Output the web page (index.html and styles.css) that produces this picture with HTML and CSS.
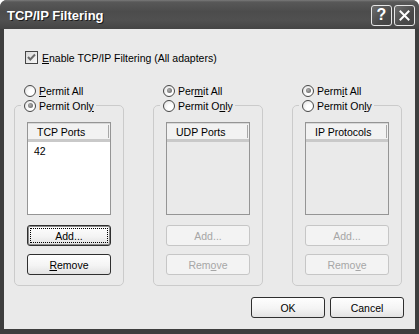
FILE: index.html
```html
<!DOCTYPE html>
<html>
<head>
<meta charset="utf-8">
<link rel="stylesheet" href="styles.css">
</head>
<body>
<div class="window">
  <div class="titlebar">
    <span class="title">TCP/IP Filtering</span>
    <div class="tb-btns">
      <span class="tb-btn help">?</span>
      <span class="tb-btn close"><svg width="11" height="11" viewBox="0 0 11 11"><path d="M1.5 1.5 L9.5 9.5 M9.5 1.5 L1.5 9.5" stroke="#fff" stroke-width="2" stroke-linecap="square"/></svg></span>
    </div>
  </div>
  <div class="client">
    <div class="check-row">
      <span class="checkbox"><svg width="11" height="11" viewBox="0 0 11 11"><path d="M2 5 L4.3 7.5 L9 2.5" fill="none" stroke="#6a6a6a" stroke-width="2"/></svg></span>
      <span><u>E</u>nable TCP/IP Filtering (All adapters)</span>
    </div>
    <div class="columns">
      <div class="col">
        <div class="radio-row top"><span class="radio"></span><span><u>P</u>ermit All</span></div>
        <fieldset class="group">
          <legend><span class="radio-row"><span class="radio on"></span><span>Permit Onl<u>y</u></span></span></legend>
          <div class="listview">
            <div class="lv-header"><span class="lv-col">TCP Ports</span></div>
            <div class="lv-item">42</div>
          </div>
          <button class="btn add focus">Add...</button>
          <button class="btn"><u>R</u>emove</button>
        </fieldset>
      </div>
      <div class="col">
        <div class="radio-row top"><span class="radio on"></span><span>Per<u>m</u>it All</span></div>
        <fieldset class="group">
          <legend><span class="radio-row"><span class="radio"></span><span>Permit O<u>n</u>ly</span></span></legend>
          <div class="listview disabled">
            <div class="lv-header"><span class="lv-col">UDP Ports</span></div>
          </div>
          <button class="btn add disabled">Add...</button>
          <button class="btn disabled">Rem<u>o</u>ve</button>
        </fieldset>
      </div>
      <div class="col">
        <div class="radio-row top"><span class="radio on"></span><span>Perm<u>i</u>t All</span></div>
        <fieldset class="group">
          <legend><span class="radio-row"><span class="radio"></span><span>Permit On<u>l</u>y</span></span></legend>
          <div class="listview disabled">
            <div class="lv-header"><span class="lv-col">IP Protocols</span></div>
          </div>
          <button class="btn add disabled">Add...</button>
          <button class="btn disabled">Remo<u>v</u>e</button>
        </fieldset>
      </div>
    </div>
    <div class="footer">
      <button class="btn">OK</button>
      <button class="btn">Cancel</button>
    </div>
  </div>
</div>
</body>
</html>
```

FILE: styles.css
```css
html, body {
  margin: 0;
  padding: 0;
  background: #ffffff;
}

.window {
  width: 419px;
  height: 334px;
  box-sizing: border-box;
  background: #3e3e3e;
  border-radius: 7px 7px 0 0;
  display: flex;
  flex-direction: column;
  overflow: hidden;
}

.titlebar {
  height: 29px;
  flex: none;
  display: flex;
  align-items: center;
  padding: 0 4px 0 7px;
  box-sizing: border-box;
  background: linear-gradient(#7a7a7a 0, #585858 2px, #4c4c4c 40%, #505050 70%, #444 100%);
}

.title {
  flex: 1;
  color: #ffffff;
  font: bold 13px "Liberation Sans", Arial, sans-serif;
  text-shadow: 1px 1px 0 #1c1c1c;
  padding-top: 1px;
}

.tb-btns {
  display: flex;
  gap: 2px;
  padding-top: 1px;
}

.tb-btn {
  width: 21px;
  height: 21px;
  box-sizing: border-box;
  border: 1px solid #e6e6e6;
  border-radius: 3px;
  background: linear-gradient(135deg, #6e6e6e, #4a4a4a 60%, #444);
  display: flex;
  align-items: center;
  justify-content: center;
  color: #ffffff;
}

.help {
  font: bold 16px "Liberation Sans", Arial, sans-serif;
}

.client {
  margin: 0 4px 5px 4px;
  height: 300px;
  flex: none;
  background: #eaeaea;
  display: flex;
  flex-direction: column;
  font: 10.5px "Liberation Sans", Arial, sans-serif;
  color: #000;
}

.check-row {
  display: flex;
  align-items: center;
  gap: 4px;
  height: 15px;
  margin: 21px 0 0 21px;
}

.checkbox {
  width: 13px;
  height: 13px;
  box-sizing: border-box;
  border: 1px solid #454545;
  background: linear-gradient(135deg, #d8d8d8, #f8f8f8);
  display: flex;
  align-items: center;
  justify-content: center;
}

.columns {
  display: flex;
  gap: 29px;
  padding-left: 10px;
  margin-top: 18px;
}

.col {
  width: 110px;
  display: flex;
  flex-direction: column;
}

.radio-row {
  height: 15px;
  display: flex;
  align-items: center;
}

.radio-row.top {
  padding-left: 10px;
}

.radio {
  width: 12px;
  height: 12px;
  box-sizing: border-box;
  border: 1px solid #474747;
  border-radius: 50%;
  background: radial-gradient(circle at 65% 65%, #ffffff 30%, #dcdcdc 100%);
  margin-right: 3px;
  flex: none;
  display: flex;
  align-items: center;
  justify-content: center;
}

.radio.on::after {
  content: "";
  width: 5px;
  height: 5px;
  border-radius: 50%;
  background: radial-gradient(circle at 40% 40%, #b0b0b0, #5a5a5a);
}

.group {
  margin: 0;
  width: 110px;
  min-width: 0;
  box-sizing: border-box;
  border: 1px solid #cbcbcb;
  border-radius: 5px;
  padding: 9px 12px 10px 12px;
}

.group legend {
  padding: 0 2px 0 3px;
  margin-left: -6px;
}

.listview {
  height: 93px;
  box-sizing: border-box;
  border: 1px solid #959595;
  background: #ffffff;
}

.listview.disabled {
  background: #eaeaea;
}

.lv-header {
  height: 16px;
  display: flex;
  background: #f2f2f2;
  border-bottom: 3px solid #c9c9c9;
  box-shadow: 0 1px 0 #d8d8d8 inset;
}

.lv-col {
  width: 81px;
  box-sizing: border-box;
  padding-left: 9px;
  padding-top: 1px;
  border-right: 1px solid #a8a8a8;
  margin: 2px 0 1px 0;
  line-height: 12px;
}

.lv-item {
  padding-left: 6px;
  line-height: 15px;
  margin-top: 2px;
}

.btn {
  display: block;
  width: 100%;
  height: 21px;
  box-sizing: border-box;
  border: 1px solid #2f2f2f;
  border-radius: 3px;
  background: linear-gradient(#fefefe, #f4f4f4 55%, #e2e2e2);
  font: 10.5px "Liberation Sans", Arial, sans-serif;
  color: #000;
  padding: 0;
  margin: 0;
}

.btn.add {
  margin-top: 10px;
}

.btn + .btn {
  margin-top: 8px;
}

.btn.focus {
  box-shadow: inset 0 0 0 1px #8a8a8a;
  outline: 1px dotted #000;
  outline-offset: -4px;
}

.btn.disabled {
  border-color: #c6c6c6;
  color: #a6a6a6;
  background: #f3f3f3;
}

.footer {
  display: flex;
  justify-content: flex-end;
  gap: 5px;
  margin-top: 11px;
  padding-right: 11px;
}

.footer .btn {
  width: 74px;
}

.footer .btn + .btn {
  margin-top: 0;
}
```
